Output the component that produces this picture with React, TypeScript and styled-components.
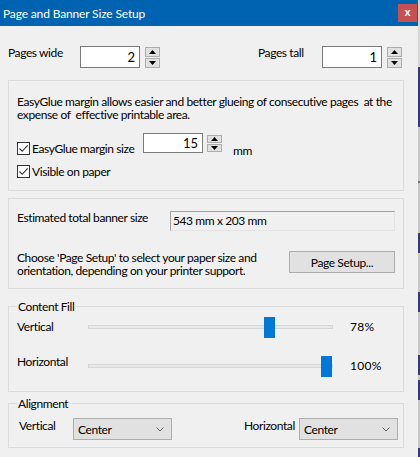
import React from "react";
import styled, { createGlobalStyle } from "styled-components";

const Global = createGlobalStyle`
  html, body { margin: 0; padding: 0; background: #f0f0f0; overflow: hidden; }
  * { box-sizing: border-box; }
`;

const FONT = `"Lato", "Noto Sans", Arial, sans-serif`;

const Window = styled.div`
  width: 420px;
  height: 457px;
  display: flex;
  font-family: ${FONT};
  font-size: 12px;
  letter-spacing: -0.4px;
  color: #000;
`;

const Main = styled.div`
  width: 418px;
  display: flex;
  flex-direction: column;
  background: #f0f0f0;
`;

const EdgeStrip = styled.div`
  width: 2px;
  background: linear-gradient(
    to bottom,
    #d4d4d4 0px, #d4d4d4 67px,
    #3b3586 67px, #3b3586 127px,
    #c8c8c8 127px, #c8c8c8 181px,
    #707070 181px, #707070 183px,
    #c8c8c8 183px, #c8c8c8 233px,
    #3b3586 233px, #3b3586 253px,
    #c8c8c8 253px, #c8c8c8 292px,
    #3b3586 292px, #3b3586 312px,
    #c8c8c8 312px, #c8c8c8 355px,
    #3b3586 355px, #3b3586 375px,
    #c8c8c8 375px, #c8c8c8 380px,
    #3b3586 380px, #3b3586 400px,
    #c8c8c8 400px, #c8c8c8 448px,
    #3b3586 448px
  );
`;

const TitleBar = styled.div`
  height: 26px;
  flex: none;
  background: #0063b1;
  display: flex;
  align-items: center;
  justify-content: space-between;
  padding: 0 1px 0 3px;
`;

const Title = styled.span`
  color: #fff;
  font-size: 12px;
  letter-spacing: -0.15px;
`;

const CloseBtn = styled.div`
  width: 19px;
  height: 18px;
  background: #c75050;
  color: #fff;
  font-weight: bold;
  font-size: 11px;
  font-family: "Liberation Sans", Arial, sans-serif;
  letter-spacing: 0;
  display: flex;
  align-items: center;
  justify-content: center;
  line-height: 1;
  padding-bottom: 2px;
`;

const Body = styled.div`
  flex: 1;
  display: flex;
  flex-direction: column;
  padding: 0 14px 0 8px;
`;

const TopRow = styled.div`
  display: flex;
  align-items: flex-start;
  margin-top: 20px;
  padding-right: 2px;
`;

const Label = styled.span<{ $w?: number; $mt?: number; $ml?: number }>`
  display: inline-block;
  white-space: nowrap;
  line-height: 15px;
  ${(p) => (p.$w !== undefined ? `width: ${p.$w}px; flex: none;` : "")}
  margin-top: ${(p) => p.$mt ?? 0}px;
  margin-left: ${(p) => p.$ml ?? 0}px;
`;

const NumBox = styled.div<{ $w: number; $h: number; $mt?: number }>`
  width: ${(p) => p.$w}px;
  height: ${(p) => p.$h}px;
  margin-top: ${(p) => p.$mt ?? 0}px;
  border: 1px solid #7a7a7a;
  background: #fff;
  text-align: right;
  padding-right: 4px;
  font-size: 13px;
  letter-spacing: 0;
  line-height: ${(p) => p.$h - 2}px;
  flex: none;
`;

const Spinner = styled.div<{ $ml: number; $mt?: number }>`
  display: flex;
  flex-direction: column;
  gap: 1px;
  margin-left: ${(p) => p.$ml}px;
  margin-top: ${(p) => p.$mt ?? 0}px;
  flex: none;
`;

const SpinBtn = styled.div<{ $h: number }>`
  width: 15px;
  height: ${(p) => p.$h}px;
  border: 1px solid #adadad;
  background: #e1e1e1;
  display: flex;
  align-items: center;
  justify-content: center;
`;

const Spacer = styled.div`
  flex: 1;
`;

const Group = styled.div<{ $mt: number; $h: number }>`
  margin-top: ${(p) => p.$mt}px;
  height: ${(p) => p.$h}px;
  flex: none;
  border: 1px solid #dcdcdc;
  display: flex;
  flex-direction: column;
  padding: 0 8px;
`;

const Para = styled.p<{ $mt: number }>`
  margin: ${(p) => p.$mt}px 0 0 0;
  line-height: 13px;
  white-space: pre;
`;

const Row = styled.div<{ $mt: number; $mr?: number }>`
  display: flex;
  align-items: flex-start;
  margin-top: ${(p) => p.$mt}px;
  margin-right: ${(p) => p.$mr ?? 0}px;
`;

const Check = styled.div<{ $mt?: number }>`
  width: 13px;
  height: 13px;
  border: 1px solid #333;
  background: #fff;
  margin-top: ${(p) => p.$mt ?? 0}px;
  margin-right: 2px;
  flex: none;
  display: flex;
  align-items: center;
  justify-content: center;
`;

const ReadOnlyField = styled.div`
  width: 225px;
  height: 20px;
  border: 1px solid #e3e3e3;
  border-top-color: #a0a0a0;
  border-left-color: #a0a0a0;
  background: #f0f0f0;
  padding-left: 2px;
  line-height: 18px;
  flex: none;
`;

const Button = styled.div`
  width: 106px;
  height: 22px;
  border: 1px solid #adadad;
  background: #e1e1e1;
  display: flex;
  align-items: center;
  justify-content: center;
  flex: none;
`;

const Fieldset = styled.fieldset<{ $mt: number; $h: number }>`
  margin: ${(p) => p.$mt}px 0 0 0;
  height: ${(p) => p.$h}px;
  flex: none;
  border: 1px solid #dcdcdc;
  padding: 0 8px;
  min-width: 0;
  display: flex;
  flex-direction: column;
`;

const Legend = styled.legend`
  padding: 0 2px 0 1px;
  margin-left: 0;
  line-height: 15px;
  font-size: 12px;
`;

const SliderRow = styled.div<{ $mt: number }>`
  display: flex;
  align-items: center;
  height: 21px;
  margin-top: ${(p) => p.$mt}px;
`;

const Track = styled.div`
  position: relative;
  width: 245px;
  height: 4px;
  background: #e7eaea;
  border: 1px solid #d6d6d6;
  flex: none;
`;

const Thumb = styled.div`
  position: absolute;
  top: -9px;
  width: 11px;
  height: 21px;
  background: #0078d7;
`;

const Value = styled.span`
  margin-left: 17px;
  letter-spacing: 0.3px;
`;

const SelectBox = styled.div`
  width: 99px;
  height: 22px;
  border: 1px solid #adadad;
  background: #e1e1e1;
  display: flex;
  align-items: center;
  justify-content: space-between;
  padding: 1px 7px 0 4px;
  flex: none;
`;

const Up = () => (
  <svg width="7" height="4" viewBox="0 0 7 4">
    <polygon points="0,4 7,4 3.5,0" fill="#000" />
  </svg>
);
const Down = () => (
  <svg width="7" height="4" viewBox="0 0 7 4">
    <polygon points="0,0 7,0 3.5,4" fill="#000" />
  </svg>
);

const Spin: React.FC<{ ml: number; mt?: number; h: number }> = ({ ml, mt, h }) => (
  <Spinner $ml={ml} $mt={mt}>
    <SpinBtn $h={h}>
      <Up />
    </SpinBtn>
    <SpinBtn $h={h}>
      <Down />
    </SpinBtn>
  </Spinner>
);

const CheckMark = () => (
  <svg width="11" height="11" viewBox="0 0 11 11">
    <polyline points="1.5,5.5 4.2,8.3 9.6,2.4" fill="none" stroke="#333" strokeWidth="1.1" />
  </svg>
);

const Chevron = () => (
  <svg width="8" height="5" viewBox="0 0 8 5">
    <polyline points="0.5,0.5 4,4 7.5,0.5" fill="none" stroke="#606060" strokeWidth="1" />
  </svg>
);

const Slider: React.FC<{ pct: number }> = ({ pct }) => (
  <Track>
    <Thumb style={{ left: `${232 - ((100 - pct) * 57) / 22}px` }} />
  </Track>
);

export default function App() {
  return (
    <>
      <Global />
      <Window>
        <Main>
          <TitleBar>
            <Title>Page and Banner Size Setup</Title>
            <CloseBtn>x</CloseBtn>
          </TitleBar>
          <Body>
            <TopRow>
              <Label $w={72} $mt={-1}>Pages wide</Label>
              <NumBox $w={60} $h={22}>2</NumBox>
              <Spin ml={5} mt={1} h={10} />
              <Spacer />
              <Label $w={64} $mt={-1}>Pages tall</Label>
              <NumBox $w={60} $h={22}>1</NumBox>
              <Spin ml={5} mt={1} h={10} />
            </TopRow>

            <Group $mt={12} $h={111}>
              <Para $mt={14}>
                {"EasyGlue margin allows easier and better glueing of consecutive pages  at the\nexpense of  effective printable area."}
              </Para>
              <Row $mt={12}>
                <Check $mt={9}>
                  <CheckMark />
                </Check>
                <Label $w={111} $mt={8}>EasyGlue margin size</Label>
                <NumBox $w={60} $h={20}>15</NumBox>
                <Spin ml={4} mt={2} h={8} />
                <Label $ml={11} $mt={10}>mm</Label>
              </Row>
              <Row $mt={7}>
                <Check>
                  <CheckMark />
                </Check>
                <Label $mt={-1}>Visible on paper</Label>
              </Row>
            </Group>

            <Group $mt={7} $h={91}>
              <Row $mt={12}>
                <Label $w={153} $mt={-1}>Estimated total banner size</Label>
                <ReadOnlyField>543 mm x 203 mm</ReadOnlyField>
              </Row>
              <Row $mt={20}>
                <Para $mt={0}>
                  {"Choose 'Page Setup' to select your paper size and\norientation, depending on your printer support."}
                </Para>
                <Spacer />
                <Button>Page Setup...</Button>
              </Row>
            </Group>

            <Fieldset $mt={10} $h={93}>
              <Legend>Content Fill</Legend>
              <SliderRow $mt={2}>
                <Label $w={71}>Vertical</Label>
                <Slider pct={78} />
                <Value>78%</Value>
              </SliderRow>
              <SliderRow $mt={18}>
                <Label $w={71} $mt={-8}>Horizontal</Label>
                <Slider pct={100} />
                <Value>100%</Value>
              </SliderRow>
            </Fieldset>

            <Fieldset $mt={4} $h={52}>
              <Legend>Alignment</Legend>
              <Row $mt={7} $mr={-3}>
                <Label $w={54} $ml={2} $mt={0}>Vertical</Label>
                <SelectBox>
                  <span>Center</span>
                  <Chevron />
                </SelectBox>
                <Spacer />
                <Label $w={55} $mt={0}>Horizontal</Label>
                <SelectBox>
                  <span>Center</span>
                  <Chevron />
                </SelectBox>
              </Row>
            </Fieldset>
          </Body>
        </Main>
        <EdgeStrip />
      </Window>
    </>
  );
}
